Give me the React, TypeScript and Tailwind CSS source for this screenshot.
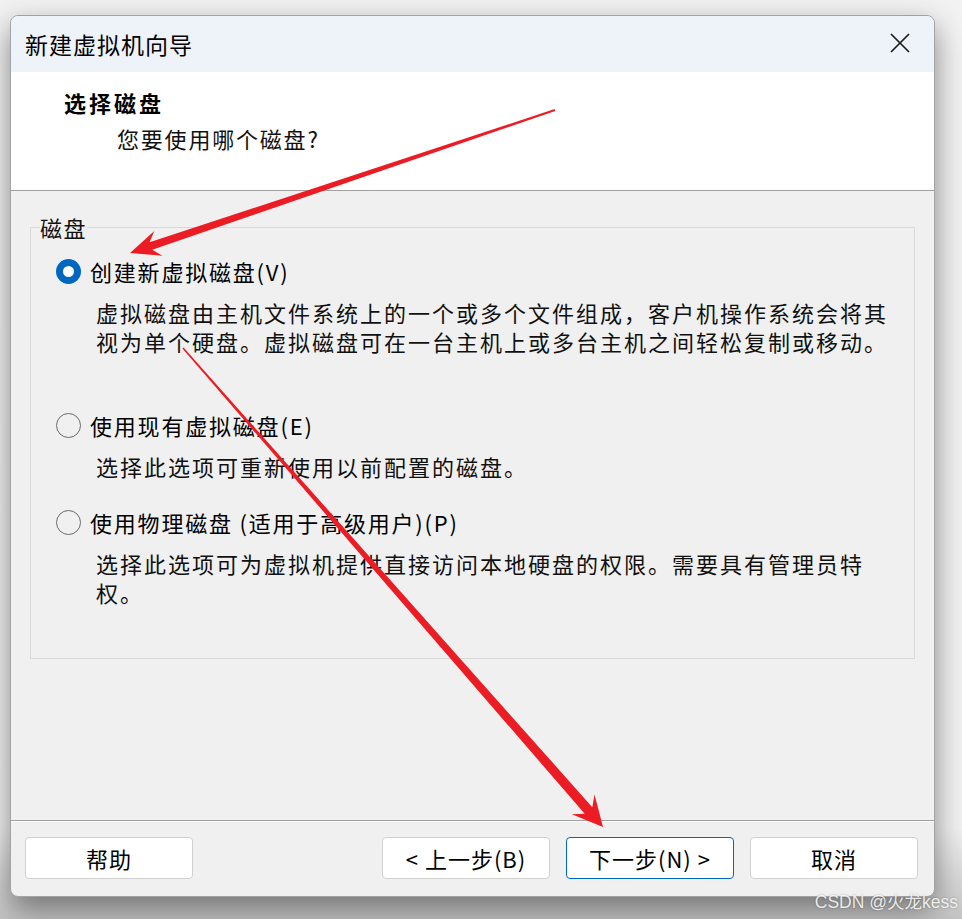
import { useState } from "react";

const options = [
  {
    key: "new",
    label: "创建新虚拟磁盘(V)",
    desc: ["虚拟磁盘由主机文件系统上的一个或多个文件组成，客户机操作系统会将其", "视为单个硬盘。虚拟磁盘可在一台主机上或多台主机之间轻松复制或移动。"],
  },
  {
    key: "existing",
    label: "使用现有虚拟磁盘(E)",
    desc: ["选择此选项可重新使用以前配置的磁盘。"],
  },
  {
    key: "physical",
    label: "使用物理磁盘 (适用于高级用户)(P)",
    desc: ["选择此选项可为虚拟机提供直接访问本地硬盘的权限。需要具有管理员特", "权。"],
  },
];

function Radio({ checked }: { checked: boolean }) {
  if (checked) {
    return (
      <span className="flex h-[25px] w-[25px] shrink-0 items-center justify-center rounded-full bg-[#0067c0]">
        <span className="h-[11px] w-[11px] rounded-full bg-white" />
      </span>
    );
  }
  return <span className="h-[25px] w-[25px] shrink-0 rounded-full border-[1.5px] border-[#6b6b6b]" />;
}

function Button({ children, primary }: { children: React.ReactNode; primary?: boolean }) {
  return (
    <button
      className={
        primary
          ? "flex h-[42px] w-[168px] items-center justify-center rounded-[4px] border border-[#0067c0] bg-white text-[22px] leading-none tracking-[1px] text-black"
          : "flex h-[42px] w-[168px] items-center justify-center rounded-[4px] border border-[#d0d0d0] bg-white text-[22px] leading-none tracking-[1px] text-black"
      }
    >
      {children}
    </button>
  );
}

export default function App() {
  const [selected, setSelected] = useState("new");

  return (
    <div className="relative h-[919px] w-[962px] overflow-hidden bg-gradient-to-b from-[#f2f2f2] from-90% to-[#c4c4c4] pl-[10px] pt-[15px] font-['Noto_Sans_CJK_SC',sans-serif] text-black">
      <div className="flex h-[882px] w-[925px] flex-col overflow-hidden rounded-[8px] border border-[#a3a3a3] bg-[#f0f0f0] shadow-[0_12px_30px_rgba(0,0,0,0.45)]">
        {/* title bar */}
        <div className="flex h-[56px] shrink-0 items-center justify-between bg-[#eef2f9] pl-[14px] pr-[23px]">
          <span className="text-[23px] leading-none tracking-[1px]">新建虚拟机向导</span>
          <svg width="22" height="22" viewBox="0 0 22 22" className="mt-[-2px]">
            <path d="M2 2 L20 20 M20 2 L2 20" stroke="#1a1a1a" strokeWidth="1.7" fill="none" />
          </svg>
        </div>

        {/* header */}
        <div className="h-[119px] shrink-0 border-b border-[#a0a0a0] bg-white pl-[53px] pt-[16px]">
          <div className="text-[22px] font-bold leading-[28px] tracking-[3px]">选择磁盘</div>
          <div className="ml-[53px] mt-[8px] text-[22px] leading-[28px] tracking-[1.8px] text-[#111]">您要使用哪个磁盘?</div>
        </div>

        {/* body */}
        <div className="flex-1">
          <fieldset className="mx-[19px] mt-[24px] border border-[#d9d9d9] pb-[51px]">
            <legend className="ml-[9px] text-[22px] leading-[24px] tracking-[1.5px] text-[#111]">磁盘</legend>
            <div className="flex flex-col pl-[25px] pt-[17px]">
              {options.map((o, i) => (
                <div key={o.key} className={i === 0 ? "" : i === 1 ? "mt-[54px]" : "mt-[26px]"}>
                  <label className="flex h-[30px] cursor-default items-center gap-[9px]" onClick={() => setSelected(o.key)}>
                    <Radio checked={selected === o.key} />
                    <span className="text-[22px] leading-[30px] tracking-[1.8px]">{o.label}</span>
                  </label>
                  <div className="ml-[40px] mt-[12px] text-[22px] leading-[29px] tracking-[2px] text-[#111]">
                    {o.desc.map((line) => (
                      <div key={line}>{line}</div>
                    ))}
                  </div>
                </div>
              ))}
            </div>
          </fieldset>
        </div>

        {/* footer */}
        <div className="shrink-0 border-t border-[#a0a0a0]">
          <div className="flex h-[75px] items-start justify-between border-t border-white pl-[14px] pr-[16px] pt-[15px]">
            <Button>帮助</Button>
            <div className="flex gap-[16px]">
              <Button>&lt; 上一步(B)</Button>
              <Button primary>下一步(N) &gt;</Button>
              <Button>取消</Button>
            </div>
          </div>
        </div>
      </div>

      {/* annotation arrows */}
      <svg className="pointer-events-none absolute left-0 top-0" width="962" height="919" viewBox="0 0 962 919">
        <polygon
          fill="#ec1c24"
          points="554.7,109.1 149.6,242.2 154.3,231.1 130,253 162.5,255.7 152.2,249.8 555.3,110.9"
        />
        <polygon
          fill="#ec1c24"
          points="183.6,347.5 592.3,807.2 594.5,794.5 603,827 571.9,814.3 584.7,813.8 182.4,348.5"
        />
      </svg>

      <span className="absolute right-[4px] top-[890px] whitespace-nowrap font-['Liberation_Sans','Noto_Sans_CJK_SC',sans-serif] text-[17.5px] leading-[24px] text-white/85 [text-shadow:0_0_2px_rgba(0,0,0,0.35)]">
        CSDN @火龙kess
      </span>
    </div>
  );
}
